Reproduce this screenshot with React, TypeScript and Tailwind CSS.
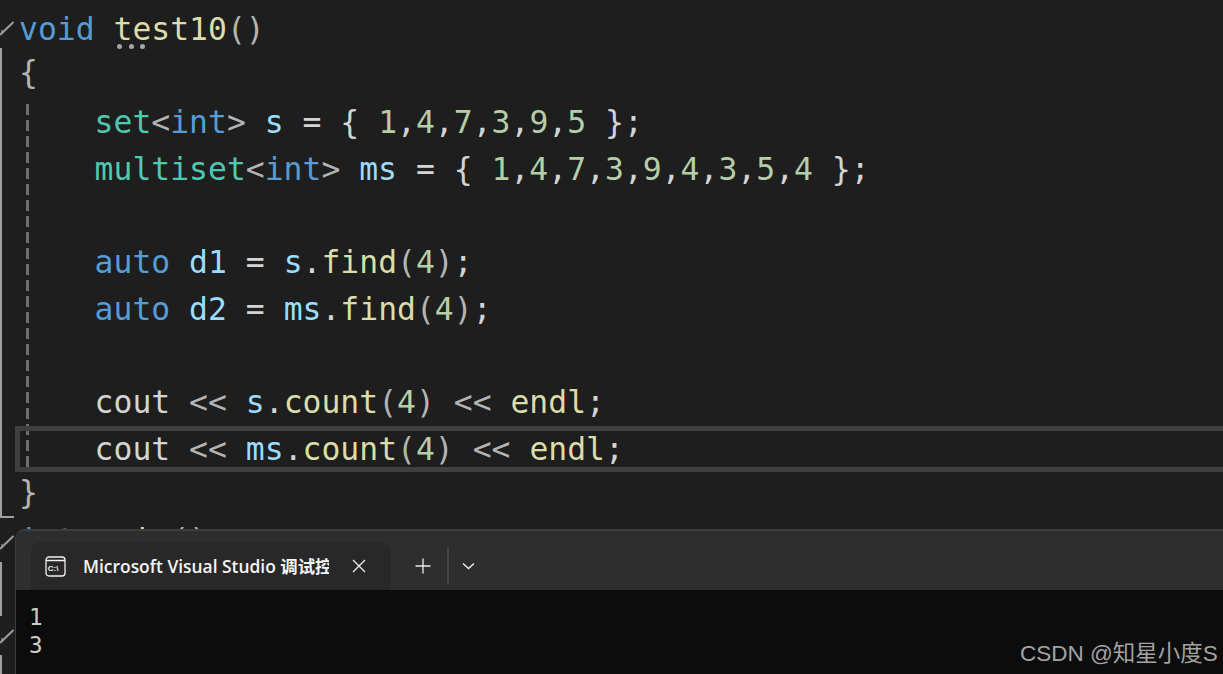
const kw = 'text-[#569cd6]';
const fn = 'text-[#dcdcaa]';
const ty = 'text-[#4ec9b0]';
const vr = 'text-[#9cdcfe]';
const num = 'text-[#b5cea8]';
const pl = 'text-[#d4d4d4]';
const ang = 'text-[#b4b4b4]';

type Tok = [string, string];

const lines: Tok[][] = [
  [[kw, 'void'], [pl, ' '], [fn, 'test10'], [ang, '()']],
  [[ang, '{']],
  [[ty, '    set'], [ang, '<'], [kw, 'int'], [ang, '>'], [pl, ' '], [vr, 's'], [pl, ' = { '], [num, '1'], [pl, ','], [num, '4'], [pl, ','], [num, '7'], [pl, ','], [num, '3'], [pl, ','], [num, '9'], [pl, ','], [num, '5'], [pl, ' };']],
  [[ty, '    multiset'], [ang, '<'], [kw, 'int'], [ang, '>'], [pl, ' '], [vr, 'ms'], [pl, ' = { '], [num, '1'], [pl, ','], [num, '4'], [pl, ','], [num, '7'], [pl, ','], [num, '3'], [pl, ','], [num, '9'], [pl, ','], [num, '4'], [pl, ','], [num, '3'], [pl, ','], [num, '5'], [pl, ','], [num, '4'], [pl, ' };']],
  [],
  [[kw, '    auto'], [pl, ' '], [vr, 'd1'], [pl, ' = '], [vr, 's'], [pl, '.'], [fn, 'find'], [ang, '('], [num, '4'], [ang, ')'], [pl, ';']],
  [[kw, '    auto'], [pl, ' '], [vr, 'd2'], [pl, ' = '], [vr, 'ms'], [pl, '.'], [fn, 'find'], [ang, '('], [num, '4'], [ang, ')'], [pl, ';']],
  [],
  [[pl, '    cout '], [ang, '<<'], [pl, ' '], [vr, 's'], [pl, '.'], [fn, 'count'], [ang, '('], [num, '4'], [ang, ')'], [pl, ' '], [ang, '<<'], [pl, ' '], [fn, 'endl'], [pl, ';']],
  [[pl, '    cout '], [ang, '<<'], [pl, ' '], [vr, 'ms'], [pl, '.'], [fn, 'count'], [ang, '('], [num, '4'], [ang, ')'], [pl, ' '], [ang, '<<'], [pl, ' '], [fn, 'endl'], [pl, ';']],
  [[ang, '}']],
  [[kw, 'int'], [pl, ' '], [fn, 'main'], [ang, '()']],
];

// the brace lines and the half hidden last line sit a little higher in the reference font
const lifted: Record<number, string> = {
  1: '-translate-y-[3px]',
  10: '-translate-y-[3px]',
  11: '-translate-y-[2px]',
};

function Chevron({ top }: { top: number }) {
  return (
    <svg className="absolute left-0" style={{ top }} width="14" height="15" viewBox="0 0 14 15" fill="none">
      <path d="M0 14 L13.5 1" stroke="#9a9a9a" strokeWidth="2" />
      <path d="M2 9 L2 13" stroke="#9a9a9a" strokeWidth="1.2" />
    </svg>
  );
}

function TerminalIcon() {
  return (
    <svg width="21" height="21" viewBox="0 0 21 21" fill="none" className="shrink-0">
      <rect x="1" y="1" width="19" height="19" rx="3" stroke="#f2f2f2" strokeWidth="1.3" />
      <path d="M1 4.5 H20" stroke="#f2f2f2" strokeWidth="1.3" />
      <text x="2.8" y="15" fontSize="8" fontWeight="700" fill="#f2f2f2" fontFamily="Liberation Sans, sans-serif">C:\</text>
    </svg>
  );
}

export default function App() {
  return (
    <div className="relative h-[674px] w-[1223px] overflow-hidden bg-[#1e1e1e]">
      {/* code */}
      <div className="pl-[19px] pt-[5.5px] font-['DejaVu_Sans_Mono',monospace] text-[31.4px] leading-[46.7px]">
        {lines.map((line, i) => (
          <div key={i} className={`h-[46.7px] whitespace-pre ${lifted[i] ?? ''}`}>
            {line.map(([color, text], j) => (
              <span key={j} className={color}>
                {text}
              </span>
            ))}
          </div>
        ))}
      </div>

      {/* margin marks */}
      <Chevron top={21} />
      <div className="absolute left-0 top-[48px] h-[470px] w-[2px] bg-[#a0a0a0]" />
      <div className="absolute left-0 top-[516px] h-[2px] w-[14px] bg-[#a0a0a0]" />
      <div className="absolute left-[26px] top-[104px] h-[366px] w-[3px] bg-[repeating-linear-gradient(to_bottom,#6e6e6e_0,#6e6e6e_11px,transparent_11px,transparent_16px)]" />
      <Chevron top={535} />
      <div className="absolute left-0 top-[562px] h-[54px] w-[2px] bg-[#a0a0a0]" />
      <Chevron top={629} />
      <div className="absolute left-0 top-[655px] h-[19px] w-[2px] bg-[#a0a0a0]" />

      {/* hint dots */}
      <div className="absolute left-[117px] top-[44px] flex gap-[6.5px]">
        <span className="size-[5px] rounded-full bg-[#a6a6a6]" />
        <span className="size-[5px] rounded-full bg-[#a6a6a6]" />
        <span className="size-[5px] rounded-full bg-[#a6a6a6]" />
      </div>

      {/* current line */}
      <div className="absolute left-[15px] top-[426px] h-[46px] w-[1220px] border-[5px] border-[#3f3f3f]" />

      {/* console window */}
      <div className="absolute left-[15px] top-[529px] flex h-[145px] w-[1208px] flex-col overflow-hidden rounded-tl-[10px] border-l border-t-2 border-[#3d3d3d]">
        <div className="flex h-[59px] shrink-0 items-end bg-[#2e2e2e] pl-[15px]">
          <div className="flex h-[48px] w-[360px] items-center rounded-t-[10px] bg-[#282828] pl-[14px]">
            <TerminalIcon />
            <span className="ml-[17px] w-[246px] overflow-hidden whitespace-pre font-['Open_Sans','Noto_Sans_CJK_SC',sans-serif] text-[17.4px] font-semibold text-[#f5f5f5]">
              Microsoft Visual Studio 调试控制台
            </span>
            <svg width="14" height="14" viewBox="0 0 14 14" fill="none" className="ml-[23px]">
              <path d="M1 1 L13 13 M13 1 L1 13" stroke="#ececec" strokeWidth="1.3" />
            </svg>
          </div>
          <div className="flex h-[48px] items-center">
            <svg width="16" height="16" viewBox="0 0 16 16" fill="none" className="ml-[24px]">
              <path d="M8 0.5 V15.5 M0.5 8 H15.5" stroke="#ececec" strokeWidth="1.3" />
            </svg>
            <div className="ml-[16px] h-[36px] w-[2px] bg-[#454545]" />
            <svg width="13" height="8" viewBox="0 0 13 8" fill="none" className="ml-[13px]">
              <path d="M1 1.5 L6.5 6.5 L12 1.5" stroke="#ececec" strokeWidth="1.5" />
            </svg>
          </div>
        </div>
        <div className="flex-1 bg-[#0c0c0c] pl-[13px] pt-[13px] font-['DejaVu_Sans_Mono',monospace] text-[22.5px] leading-[28px] text-[#cccccc]">
          <div>1</div>
          <div>3</div>
        </div>
      </div>

      {/* watermark */}
      <div className="absolute left-[1020px] top-[639px] whitespace-pre font-['Liberation_Sans','Noto_Sans_CJK_SC',sans-serif] text-[22.5px] leading-[30px] text-[#a3a3a3]">
        CSDN @知星小度S
      </div>
    </div>
  );
}
